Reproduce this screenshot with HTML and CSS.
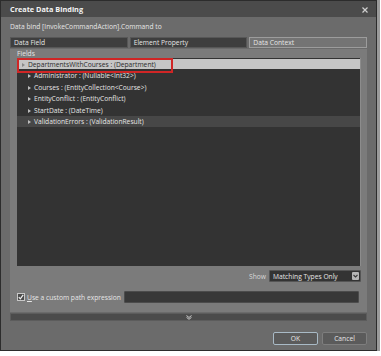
FILE: index.html
```html
<!DOCTYPE html>
<html>
<head>
	<meta charset="utf-8">
	<title>Create Data Binding</title>
	<link rel="stylesheet" href="styles.css">
</head>
<body>
	<div class="dialog">
		<div class="dialog__title">
			<span>Create Data Binding</span>
			<svg class="dialog__close" width="6" height="6" viewBox="0 0 6 6">
				<path d="M0.5 0.5 L5.5 5.5 M5.5 0.5 L0.5 5.5" stroke="#d0d0d0" stroke-width="1.2"/>
			</svg>
		</div>

		<div class="dialog__body">
			<div class="dialog__caption">Data bind [InvokeCommandAction].Command to</div>

			<div class="tabs">
				<div class="tabs__item">Data Field</div>
				<div class="tabs__item">Element Property</div>
				<div class="tabs__item tabs__item_active">Data Context</div>
			</div>

			<div class="panel">
				<div class="panel__label"><u>F</u>ields</div>

				<div class="fields">
					<div class="fields__row fields__row_selected">
						<i class="fields__arrow"></i>DepartmentsWithCourses : (Department)
					</div>
					<div class="fields__row fields__row_child">
						<i class="fields__arrow"></i>Administrator : (Nullable&lt;Int32&gt;)
					</div>
					<div class="fields__row fields__row_child">
						<i class="fields__arrow"></i>Courses : (EntityCollection&lt;Course&gt;)
					</div>
					<div class="fields__row fields__row_child">
						<i class="fields__arrow"></i>EntityConflict : (EntityConflict)
					</div>
					<div class="fields__row fields__row_child">
						<i class="fields__arrow"></i>StartDate : (DateTime)
					</div>
					<div class="fields__row fields__row_child fields__row_band">
						<i class="fields__arrow"></i>ValidationErrors : (ValidationResult)
					</div>

					<div class="fields__mark"></div>
				</div>

				<div class="show">
					<span class="show__label"><u>S</u>how</span>
					<div class="select">
						<span class="select__text">Matching Types Only</span>
						<span class="select__btn">
							<svg width="5" height="4" viewBox="0 0 5 4"><path d="M0.5 1 L2.5 3 L4.5 1" stroke="#3a3a3a" stroke-width="1.1" fill="none"/></svg>
						</span>
					</div>
				</div>

				<div class="custom">
					<span class="custom__check">
						<svg width="6" height="6" viewBox="0 0 6 6"><path d="M0.8 3.2 L2.3 4.8 L5.2 0.8" stroke="#f2f2f2" stroke-width="1.2" fill="none"/></svg>
					</span>
					<span class="custom__label"><u>U</u>se a custom path expression</span>
					<div class="custom__input"></div>
				</div>
			</div>

			<div class="expander">
				<svg width="6" height="5" viewBox="0 0 6 5"><path d="M0.5 0.5 L3 2.5 L5.5 0.5 M0.5 2.3 L3 4.3 L5.5 2.3" stroke="#d8d8d8" stroke-width="0.9" fill="none"/></svg>
			</div>

			<div class="buttons">
				<div class="button button_default">OK</div>
				<div class="button">Cancel</div>
			</div>
		</div>
	</div>
</body>
</html>
```

FILE: styles.css
```css
body {
	margin: 0;
	background-color: #fff;
	font-family: "Open Sans", "Liberation Sans", sans-serif;
	font-size: 6.7px;
	color: #e6e6e6;
}


.dialog {
	width: 375px;
	height: 349px;
	border: 1px solid #2c2c2c;
	background-color: #6b6b6b;
	box-shadow: 3px 0 0 #9a9a9a;
	display: flex;
	flex-direction: column;
}
	.dialog__title {
		height: 16px;
		padding: 0 8px 0 9px;
		display: flex;
		align-items: center;
		justify-content: space-between;
		background-color: #4b4b4b;
		color: #f4f4f4;
		font-weight: bold;
		font-size: 7.3px;
	}
		.dialog__close { margin-top: 2px; }

	.dialog__body {
		padding: 0 9px;
		display: flex;
		flex-direction: column;
	}

	.dialog__caption {
		margin-top: 5px;
		height: 10px;
		line-height: 10px;
	}


.tabs {
	margin-top: 5px;
	display: flex;
	gap: 2px;
	height: 11px;
}
	.tabs__item {
		flex: 1;
		box-sizing: border-box;
		padding-left: 3px;
		line-height: 10px;
		background-color: #3e3e3e;
		border: 1px solid #575757;
	}
	.tabs__item_active {
		background-color: #747474;
		border-color: #9c9c9c;
	}


.panel {
	margin-top: 1px;
	padding: 1px 6px 9px 7px;
	background-color: #7b7b7b;
	display: flex;
	flex-direction: column;
}
	.panel__label {
		height: 8px;
		line-height: 8px;
	}
		.panel__label u { text-decoration: none; }


.fields {
	position: relative;
	height: 208px;
	box-sizing: border-box;
	padding-top: 1px;
	background-color: #333;
	border-right: 1px solid #8c8c8c;
}
	.fields__row {
		height: 11.4px;
		line-height: 11.4px;
		padding-left: 5px;
		white-space: nowrap;
	}
	.fields__row_selected {
		height: 10px;
		line-height: 11px;
		margin-bottom: 1.4px;
		background-color: #c6c6c6;
		color: #2a2a2a;
	}
	.fields__row_child { padding-left: 11px; }
	.fields__row_band { background-color: #474747; }

	.fields__arrow {
		display: inline-block;
		width: 0;
		height: 0;
		margin-right: 3px;
		vertical-align: 0;
		border-left: 3px solid #bdbdbd;
		border-top: 2px solid transparent;
		border-bottom: 2px solid transparent;
	}
		.fields__row_selected .fields__arrow { border-left-color: #8a8a8a; }

	/* red annotation box round the first row */
	.fields__mark {
		position: absolute;
		z-index: 1;
		left: 0;
		top: 0;
		width: 152px;
		height: 11px;
		border: 2px solid #d02626;
	}


.show {
	margin-top: 4px;
	display: flex;
	justify-content: flex-end;
	align-items: center;
	gap: 3px;
}
	.show__label { color: #d8d8d8; }
		.show__label u { text-decoration: none; }

.select {
	width: 92px;
	height: 12px;
	box-sizing: border-box;
	padding-left: 3px;
	display: flex;
	align-items: center;
	justify-content: space-between;
	background-color: #333;
	border: 1px solid #555;
	border-radius: 1px;
}
	.select__btn {
		width: 7px;
		height: 8px;
		margin-right: 1px;
		display: flex;
		align-items: center;
		justify-content: center;
		background-color: #b6b6b6;
		border-radius: 1px;
	}


.custom {
	margin-top: 9px;
	height: 12px;
	display: flex;
	align-items: center;
	padding-right: 2px;
}
	.custom__check {
		width: 8px;
		height: 8px;
		box-sizing: border-box;
		display: flex;
		align-items: center;
		justify-content: center;
		background-color: #4a4a4a;
		border: 1px solid #c8c8c8;
	}
	.custom__label {
		margin-left: 2px;
		margin-right: 3px;
	}
	.custom__input {
		flex: 1;
		height: 12px;
		box-sizing: border-box;
		background-color: #383838;
		border: 1px solid #4c4c4c;
		border-radius: 1px;
	}


.expander {
	margin-top: 1px;
	height: 8px;
	display: flex;
	align-items: center;
	justify-content: center;
	background-color: #4b4b4b;
	border: 1px solid #5c5c5c;
	box-sizing: border-box;
}


.buttons {
	margin-top: 11px;
	display: flex;
	justify-content: flex-end;
	gap: 4px;
}
	.button {
		width: 45px;
		height: 13px;
		box-sizing: border-box;
		line-height: 11px;
		text-align: center;
		background-color: #5b5b5b;
		border: 1px solid #7e7e7e;
		border-radius: 2px;
	}
	.button_default { border-color: #a9bac6; }
```
